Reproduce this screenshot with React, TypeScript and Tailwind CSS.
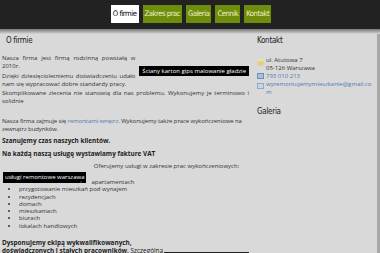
import React from "react";

const sans = { fontFamily: '"Open Sans", "DejaVu Sans", sans-serif' };
const cond = { fontFamily: '"DejaVu Sans Condensed", "DejaVu Sans", sans-serif', fontStretch: "condensed" as const };

const nav = ["O firmie", "Zakres prac", "Galeria", "Cennik", "Kontakt"];

const list = [
  "przygotowanie mieszkań pod wynajem",
  "rezydencjach",
  "domach",
  "mieszkaniach",
  "biurach",
  "lokalach handlowych",
];

export default function App() {
  return (
    <div className="w-[380px] h-[253px] overflow-hidden bg-[#d9d9d9] text-[#333]" style={sans}>
      <div className="h-[29px] bg-[#222] flex justify-center items-center gap-[4px] pb-[2px] pl-[2px]">
        {nav.map((n, i) => (
          <div
            key={n}
            className={
              "h-[18px] px-[2px] flex items-center text-[7.6px] tracking-[-0.45px] " +
              (i === 0 ? "bg-white text-black" : "bg-[#6f8d0c] text-[#eef3c8]")
            }
            style={cond}
          >
            {n}
          </div>
        ))}
      </div>
      <div className="h-[5px] bg-gradient-to-b from-[#777] to-[#d9d9d9]" />

      <div className="flex border-r-[3px] border-[#a8a8a8] h-[219px]">
        <div className="w-[249px] pl-[2px] text-[6px] leading-[8px] shrink-0">
          <h2 className="text-[8px] tracking-[-0.3px] text-[#222] pl-[4px] pt-[3px] h-[20px]" style={cond}>
            O firmie
          </h2>
          <div className="float-right bg-black text-white leading-[10px] px-[3px] mt-[12px] mb-[8px] ml-[4px]">
            Ściany karton gips malowanie gładzie
          </div>
          <p className="text-justify mb-[1.5px]">Nasza firma jest firmą rodzinną powstałą w 2010r.</p>
          <p className="text-justify mb-[1.5px]">Dzięki dziesięcioletniemu doświadczeniu udało nam się wypracować dobre standardy pracy.</p>
          <p className="text-justify">Skomplikowane zlecenia nie stanowią dla nas problemu. Wykonujemy je terminowo i solidnie</p>
          <p className="mt-[12px] tracking-[-0.08px]">
            Nasza firma zajmuje się <span className="text-[#4b7bb5]">remontami wnętrz</span>. Wykonujemy także prace wykończeniowe na zewnątrz budynków.
          </p>
          <p className="font-bold text-[6.4px] mt-[4px] text-[#222]">Szanujemy czas naszych klientów.</p>
          <p className="font-bold text-[6.4px] mt-[5px] text-[#222]">Na każdą naszą usługę wystawiamy fakture VAT</p>
          <p className="text-center pl-[82px] mt-[4px]">Oferujemy usługi w zakresie prac wykończeniowych:</p>
          <div className="float-left bg-black text-white leading-[11px] px-[2px] mt-[2px] mr-[5px] ml-[1px]">
            usługi remontowe warszawa
          </div>
          <ul className="list-disc pl-[17px] pt-[9px] leading-[7.3px]">
            <li>apartamentach</li>
            {list.map((l) => (
              <li key={l} className="clear-left">{l}</li>
            ))}
          </ul>
          <div className="float-right w-[85px] h-[6px] bg-[#222] mt-[22px]" />
          <p className="font-bold text-[6.4px] mt-[9px] text-[#222]">
            Dysponujemy ekipą wykwalifikowanych,<br />doświadczonych i stałych pracowników. <span className="font-normal">Szczególną</span>
          </p>
        </div>

        <div className="flex-1 pl-[8px] pr-[4px] text-[6px] leading-[8px]">
          <h2 className="text-[8px] tracking-[-0.3px] text-[#222] pt-[3px] h-[20px]" style={cond}>
            Kontakt
          </h2>
          <div className="flex mt-[2px]">
            <div className="w-[9px] pt-[3px] shrink-0">
              <svg width="7" height="7" viewBox="0 0 7 7">
                <rect x="0.5" y="1.5" width="6" height="5" fill="#e6cf7a" />
                <rect x="0.5" y="0.5" width="6" height="1.5" fill="#f1e3a6" />
              </svg>
            </div>
            <div>
              <div>ul. Atutowa 7</div>
              <div>05-126 Warszawa</div>
            </div>
          </div>
          <div className="flex">
            <div className="w-[9px] pt-[1px] shrink-0">
              <svg width="7" height="6" viewBox="0 0 7 6">
                <rect x="0.5" y="0.5" width="6" height="5" fill="#a9c0dc" stroke="#6e8fb8" strokeWidth="1" />
              </svg>
            </div>
            <div className="text-[#4b7bb5]">793 010 213</div>
          </div>
          <div className="flex">
            <div className="w-[9px] pt-[3px] shrink-0">
              <svg width="7" height="6" viewBox="0 0 7 6">
                <rect x="0.5" y="0.5" width="6" height="5" fill="#c8d6ea" stroke="#8fa9cc" strokeWidth="1" />
              </svg>
            </div>
            <div className="text-[#4b7bb5] break-all">wyremontujemymieszkanie@gmail.com</div>
          </div>
          <h2 className="text-[8px] tracking-[-0.3px] text-[#222] mt-[12px]" style={cond}>
            Galeria
          </h2>
        </div>
      </div>
    </div>
  );
}
